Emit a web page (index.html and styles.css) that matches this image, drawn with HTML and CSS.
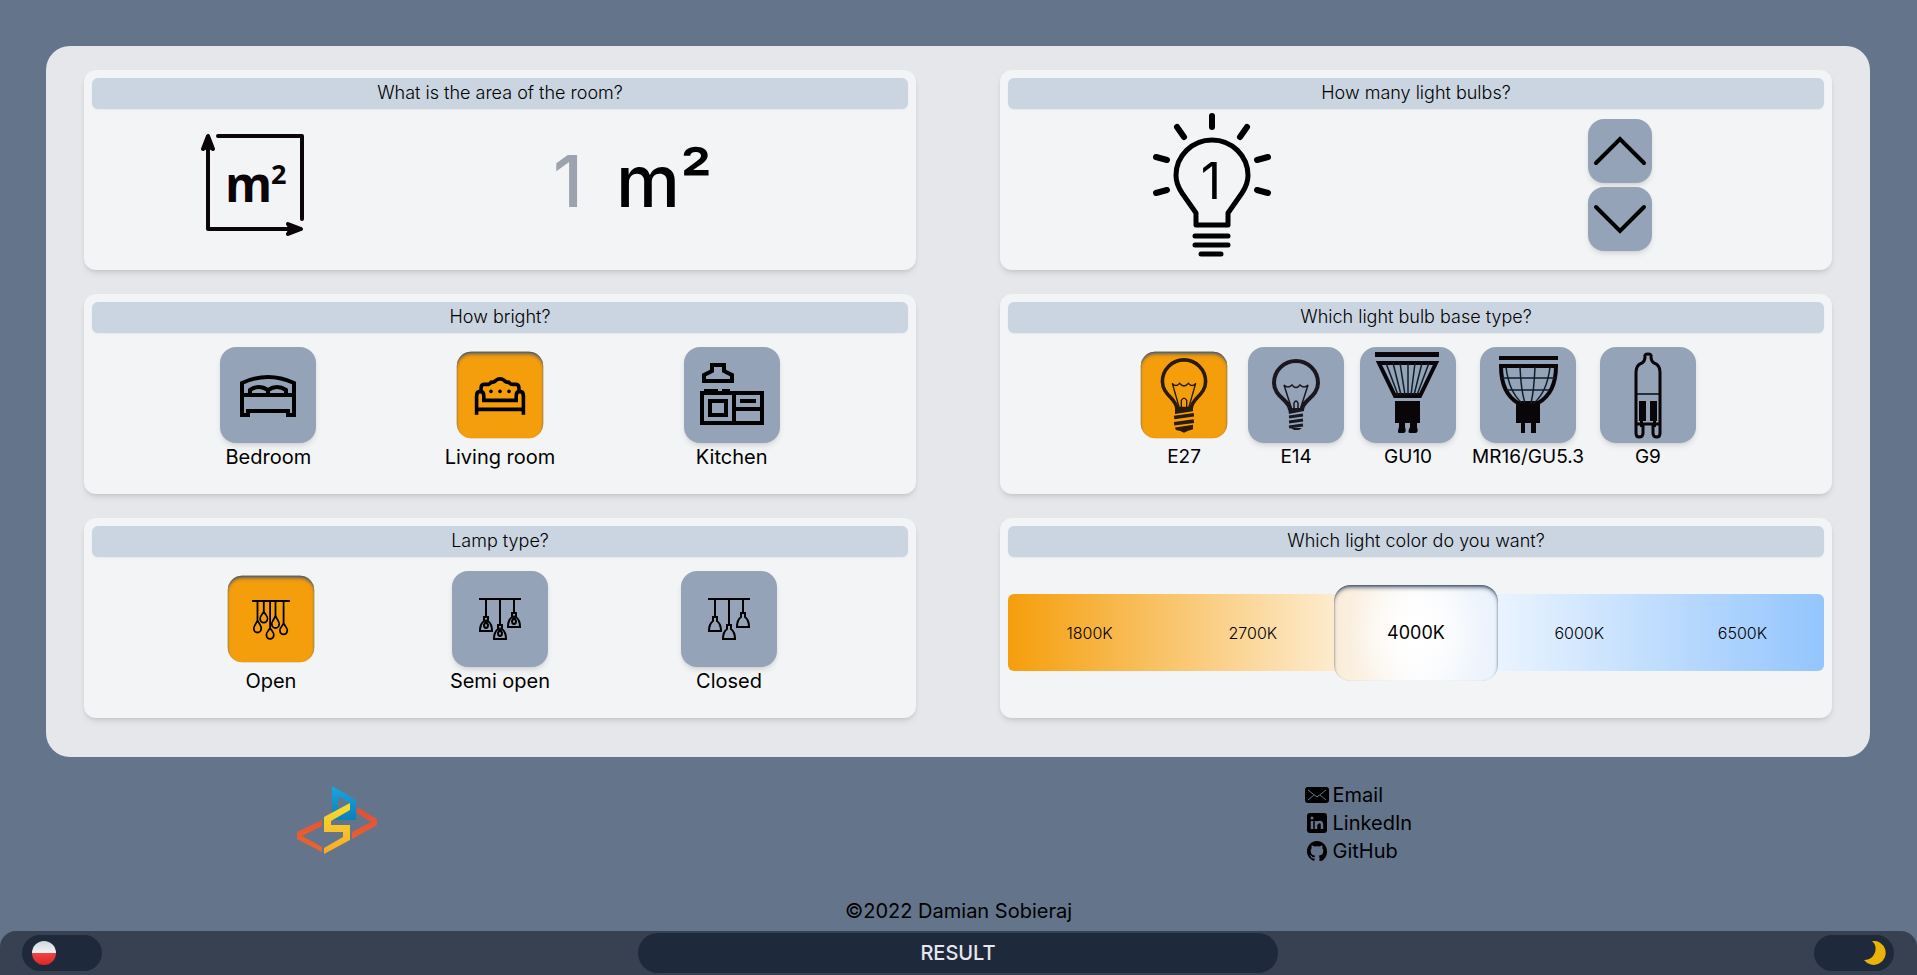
FILE: index.html
```html
<!DOCTYPE html>
<html lang="en">
<head>
<meta charset="utf-8">
<meta name="viewport" content="width=device-width, initial-scale=1">
<title>Light bulb calculator</title>
<link rel="stylesheet" href="styles.css">
</head>
<body>
<main class="panel">
  <section class="card">
    <h2 class="card-title"><label for="area">What is the area of the room?</label></h2>
    <div class="card-body spread">
      <svg class="area-icon" viewBox="0 0 104 104" aria-hidden="true">
        <g fill="none" stroke="#0b0408" stroke-width="4" stroke-linecap="round" stroke-linejoin="round">
          <path d="M8 4V96H100"/><path d="M18 3H102V86"/>
          <path fill="#0b0408" d="M8 3L3 16L8 13L13 16ZM101 96L88 91L91 96L88 101Z"/>
        </g>
        <text class="area-m" x="25" y="69">m</text><text class="area-sq" x="71" y="51">2</text>
      </svg>
      <div class="area-field">
        <input class="area-input" id="area" type="text" inputmode="numeric" placeholder="1">
        <span>m²</span>
      </div>
    </div>
  </section>

  <section class="card">
    <h2 class="card-title">How many light bulbs?</h2>
    <div class="card-body halves">
      <svg class="count-icon" viewBox="0 0 118 146" role="img" aria-label="1 bulb">
        <g fill="none" stroke="#000" stroke-width="5" stroke-linecap="round" stroke-linejoin="round">
          <path d="M43 113V101L29 81Q23 72 23 63.500A36 35.500 0 0 1 95 63.500Q95 72 89 81L75 101V113Z"/>
          <path d="M42 124H75M42 133H75M48 142H68"/>
          <path stroke-width="6" d="M59 4V15M24 15L31 25M94 15L87 25M3 45L14 48M115 45L104 48M3 81L14 78M115 81L104 78"/>
        </g>
        <text class="count-value" x="58" y="87">1</text>
      </svg>
      <div class="stepper">
        <button class="step" type="button" aria-label="More"><svg viewBox="0 0 64 64"><path d="M8 44L32 20L56 44"/></svg></button>
        <button class="step" type="button" aria-label="Fewer"><svg viewBox="0 0 64 64"><path d="M8 20L32 44L56 20"/></svg></button>
      </div>
    </div>
  </section>

  <section class="card">
    <h2 class="card-title">How bright?</h2>
    <div class="card-body evenly">
      <button class="choice" type="button" aria-pressed="false">
        <span class="tile"><svg class="line" viewBox="0 0 96 96"><path d="M22 68V36Q48 24 74 36V68H68V64H28V68ZM22 48H74M30 48V43Q39 37 48 43Q57 37 66 43V48M48 43V48"/></svg></span>
        <span>Bedroom</span>
      </button>
      <button class="choice" type="button" aria-pressed="true">
        <span class="tile"><svg class="line" viewBox="0 0 96 96"><path d="M22 70V49Q22 44 26 44Q30 44 30 49V54H66V49Q66 44 70 44Q74 44 74 49V70M22 64H74M27 43V40Q27 36 31 36Q36 37 38 34Q42 34 43 32Q48 28 53 32Q54 34 58 34Q60 37 65 36Q69 36 69 40V43"/><g fill="#000" stroke="none"><circle cx="38" cy="44" r="2"/><circle cx="48" cy="44" r="2"/><circle cx="58" cy="44" r="2"/></g></svg></span>
        <span>Living room</span>
      </button>
      <button class="choice" type="button" aria-pressed="false">
        <span class="tile"><svg class="line" viewBox="0 0 96 96"><path d="M20 34V28L28 24V18H40V24L48 28V34ZM18 46H78V76H18ZM50 46V76M50 62H78M56 54H72M26 54H42V68H26ZM20 44H34M38 44H46"/></svg></span>
        <span>Kitchen</span>
      </button>
    </div>
  </section>

  <section class="card">
    <h2 class="card-title">Which light bulb base type?</h2>
    <div class="card-body packed">
      <button class="choice" type="button" aria-pressed="true">
        <span class="tile"><svg viewBox="0 0 96 96"><g fill="none" stroke="#2a1a08"><path stroke-width="4" d="M40 63C40 52 24 48 24 33A24 24 0 0 1 72 33C72 48 56 52 56 63"/><path stroke-width="1.500" d="M43 63L35 35Q39 40 43 35Q48 41 53 35Q57 40 61 35L53 63M45 63V54Q48 49 51 54V63"/><path stroke-width="4" d="M37 73L59 70M37 80L59 77"/></g><path fill="#2a1a08" d="M38 61H58V66L38 69ZM38 84L58 81V86L52 88L48 90L44 88L39 87Z"/></svg></span>
        <span>E27</span>
      </button>
      <button class="choice" type="button" aria-pressed="false">
        <span class="tile"><svg viewBox="0 0 96 96"><g fill="none" stroke="#1a1720"><path stroke-width="4" d="M42 63C42 53 26 50 26 36A22 22 0 0 1 70 36C70 50 54 53 54 63"/><path stroke-width="1.500" d="M44 63L36 38Q40 42 44 38Q48 43 52 38Q56 42 60 38L52 63M46 62V56Q48 52 50 56V62"/><path stroke-width="3" d="M41 70L55 68M41 75L55 73M41 80L55 78"/></g><path fill="#1a1720" d="M40 61H56V64L41 67ZM43 81H54L51 83H46Z"/></svg></span>
        <span>E14</span>
      </button>
      <button class="choice" type="button" aria-pressed="false">
        <span class="tile"><svg viewBox="0 0 96 96"><path fill="#0a0508" d="M15 5H79V10H15ZM35 54H60V76H57V80Q59 86 55 86H50Q47 86 50 80V76H45V80Q47 86 43 86H39Q37 86 39 80V76H35ZM34 46H61V51H34Z"/><path fill="none" stroke="#0a0508" stroke-width="4" d="M19 16H76L60 49H35Z"/><path fill="none" stroke="#101c28" stroke-width="1.500" d="M26 16L38 48M33 16L41 48M40 16L45 48M48 16V48M55 16L51 48M62 16L54 48M69 16L57 48"/></svg></span>
        <span>GU10</span>
      </button>
      <button class="choice" type="button" aria-pressed="false">
        <span class="tile"><svg viewBox="0 0 96 96"><path fill="#0a0508" d="M19 9H78V13H19ZM36 55H60V76H56V86H51V76H45V86H41V76H36Z"/><path fill="none" stroke="#0a0508" stroke-width="4" d="M38 56Q21 46 21 19H76Q76 46 58 56Z"/><path fill="none" stroke="#101c28" stroke-width="1.500" d="M26 20Q29 45 42 56M40 20Q41 44 45 56M55 20Q54 44 51 56M70 20Q67 45 54 56M21 31H76M27 43H69"/></svg></span>
        <span>MR16/GU5.3</span>
      </button>
      <button class="choice" type="button" aria-pressed="false">
        <span class="tile"><svg viewBox="0 0 96 96"><g fill="none" stroke="#0a0508" stroke-width="3"><path d="M36 86V25Q36 18 42 16Q45 14 45 10Q44 7 48 7Q52 7 51 10Q51 14 54 16Q60 18 60 25V86Q60 90 57 90Q53 90 53 86V76M43 76V86Q43 90 39 90Q36 90 36 86M36 77H60"/><path stroke-width="1.500" d="M36 47H60"/></g><path fill="#0a0508" d="M39 54H46V74H43V80H40V74H39ZM50 54H57V74H56V80H53V74H50Z"/></svg></span>
        <span>G9</span>
      </button>
    </div>
  </section>

  <section class="card">
    <h2 class="card-title">Lamp type?</h2>
    <div class="card-body evenly">
      <button class="choice" type="button" aria-pressed="true">
        <span class="tile"><svg class="line thin" viewBox="0 0 96 96"><path d="M27 28H69M33 28V50M40 28V40M47 28V59M53 28V46M62 28V53"/><path d="M33 50Q28 58 29 59A4 4 0 0 0 37 59Q38 57 33 50ZM40 40Q35 47 36 48A4 4 0 0 0 44 48Q45 47 40 40ZM47 58Q42 65 43 66A4 4 0 0 0 51 66Q52 65 47 58ZM53 45Q48 53 49 54A4 4 0 0 0 57 54Q58 53 53 45ZM62 53Q57 60 58 61A4 4 0 0 0 66 61Q67 60 62 53Z"/></svg></span>
        <span>Open</span>
      </button>
      <button class="choice" type="button" aria-pressed="false">
        <span class="tile"><svg class="line thin" viewBox="0 0 96 96"><path d="M27 28H69M34 28V46M48 28V54M62 28V42"/><path d="M32 50V46H36V50Q40 53 40 60H28Q28 53 32 50ZM46 58V54H50V58Q54 61 54 68H42Q42 61 46 58ZM60 46V42H64V46Q68 49 68 56H56Q56 49 60 46Z"/><path d="M34 50L32 54A2 3 0 1 0 36 54ZM48 58L46 62A2 3 0 1 0 50 62ZM62 46L60 50A2 3 0 1 0 64 50Z"/></svg></span>
        <span>Semi open</span>
      </button>
      <button class="choice" type="button" aria-pressed="false">
        <span class="tile"><svg class="line thin" viewBox="0 0 96 96"><path d="M27 28H69M34 28V46M48 28V54M62 28V42"/><path d="M32 50V46H36V50Q40 53 40 60H28Q28 53 32 50ZM46 58V54H50V58Q54 61 54 68H42Q42 61 46 58ZM60 46V42H64V46Q68 49 68 56H56Q56 49 60 46Z"/></svg></span>
        <span>Closed</span>
      </button>
    </div>
  </section>

  <section class="card">
    <h2 class="card-title">Which light color do you want?</h2>
    <div class="card-body">
      <div class="colors">
        <button class="color" type="button" aria-pressed="false">1800K</button>
        <button class="color" type="button" aria-pressed="false">2700K</button>
        <button class="color" type="button" aria-pressed="true">4000K</button>
        <button class="color" type="button" aria-pressed="false">6000K</button>
        <button class="color" type="button" aria-pressed="false">6500K</button>
      </div>
    </div>
  </section>
</main>

<footer class="footer">
  <div class="footer-main">
    <svg class="logo" viewBox="0 0 82 70" role="img" aria-label="Author logo">
      <defs>
        <linearGradient id="blue" x2="0" y2="1"><stop stop-color="#1ba5e0"/><stop offset="1" stop-color="#0a80b8"/></linearGradient>
        <linearGradient id="yellow" x2="0" y2="1"><stop stop-color="#f6de2c"/><stop offset="1" stop-color="#f9a928"/></linearGradient>
        <linearGradient id="orange" x2="0" y2="1"><stop stop-color="#de4f38"/><stop offset="1" stop-color="#f0642a"/></linearGradient>
      </defs>
      <path fill="url(#blue)" fill-rule="evenodd" d="M36 1L60 15V35H36ZM42 11V24L53 18Z"/>
      <path fill="url(#orange)" d="M26 35L1 47V54L26 67V62L6 51L26 41ZM61 22L81 34V40L56 54V47L75 37L61 28Z"/>
      <path fill="url(#yellow)" d="M54 18V25L35 36V40H54V55L28 69V63L47 52V47H28V32Z"/>
    </svg>
    <nav class="links">
      <a href="#email"><svg viewBox="0 0 24 20"><rect y="2" width="24" height="16" rx="3"/><path fill="none" stroke="#64748b" d="M3 5L12 12L21 5M3 15L9 10M21 15L15 10"/></svg>Email</a>
      <a href="#linkedin"><svg viewBox="0 0 24 20"><rect x="2" width="20" height="20" rx="3"/><g fill="none" stroke="#64748b" stroke-width="2.500"><path d="M7 8V16M11 8V16M11 12Q12 9 15 9Q17 9 17 12V16"/></g><circle cx="7" cy="5" r="1.500" fill="#64748b"/></svg>LinkedIn</a>
      <a href="#github"><svg viewBox="-3 -1 30 26"><path d="M12 -1C5 -1 -1 5 -1 12.200c0 5.800 3.700 10.600 8.900 12.400.7.100.9-.3.900-.6v-2.300c-3.600.8-4.400-1.500-4.400-1.500-.6-1.500-1.400-1.900-1.400-1.900-1.200-.8.100-.8.100-.8 1.300.1 2 1.300 2 1.300 1.200 2 3 1.400 3.800 1.100.1-.8.500-1.400.8-1.700-2.900-.3-5.900-1.400-5.900-6.400 0-1.400.5-2.600 1.300-3.500-.1-.3-.6-1.600.1-3.400 0 0 1.100-.3 3.600 1.300a12 12 0 0 1 6.400 0c2.500-1.600 3.600-1.300 3.600-1.300.7 1.800.2 3.100.1 3.400.8.900 1.300 2.100 1.300 3.500 0 5-3 6.100-5.900 6.400.5.400.9 1.200.9 2.400v4.400c0 .3.200.7.900.6A13 13 0 0 0 25 12.200C25 5 19 -1 12 -1Z"/></svg>GitHub</a>
    </nav>
  </div>
  <p class="copyright">©2022 Damian Sobieraj</p>
</footer>

<div class="bar">
  <button class="toggle" type="button" aria-label="Change language"><span class="flag"></span></button>
  <button class="result" type="button">RESULT</button>
  <button class="toggle toggle-end" type="button" aria-label="Dark mode"><svg class="moon" viewBox="0 0 24 24"><path d="M10 0A12 12 0 1 1 2 19A11 11 0 0 0 10 0Z"/></svg></button>
</div>
</body>
</html>
```
FILE: styles.css
```css
* { box-sizing: border-box; }

body {
  margin: 0;
  min-height: 100vh;
  display: flex;
  flex-direction: column;
  background: #64748b;
  color: #000;
  font-family: Inter, sans-serif;
  font-size: 20px;
  line-height: 28px;
}

button {
  border: 0;
  padding: 0;
  background: none;
  color: inherit;
  font: inherit;
  cursor: pointer;
}

svg { display: block; }

.panel {
  margin: 46px 47px 0 46px;
  padding: 24px 38px 39px;
  display: grid;
  grid-template-columns: 1fr 1fr;
  gap: 24px 84px;
  background: #e5e7eb;
  border-radius: 24px;
}

.card {
  padding: 8px;
  background: #f3f4f6;
  border-radius: 12px;
  box-shadow: 0 4px 6px -1px rgba(0, 0, 0, .1), 0 2px 4px -2px rgba(0, 0, 0, .1);
}

.card-title {
  margin: 0;
  padding: 1px 0 2px;
  background: #cbd5e1;
  border-radius: 6px;
  box-shadow: 0 1px 2px rgba(0, 0, 0, .05);
  font-size: 18px;
  font-weight: 300;
  text-align: center;
}

.card-body {
  min-height: 153px;
  padding-bottom: 2px;
  display: flex;
  align-items: center;
}

.spread { justify-content: space-around; }
.evenly { justify-content: space-evenly; }
.packed { justify-content: center; gap: 16px; font-size: 19px; }

.halves {
  display: grid;
  grid-template-columns: 1fr 1fr;
  justify-items: center;
}

.area-icon { width: 104px; }
.area-m, .area-sq { font-family: "Open Sans", sans-serif; font-weight: 700; fill: #0b0408; }
.area-m { font-size: 48px; }
.area-sq { font-size: 27px; }

.area-field {
  width: 280px;
  padding-bottom: 8px;
  display: flex;
  align-items: center;
  font-size: 72px;
  font-weight: 500;
  line-height: 80px;
}

.area-input {
  width: 96px;
  padding: 0;
  border: 0;
  background: none;
  font: inherit;
  text-align: center;
}

.area-input::placeholder { color: #9ca3af; opacity: 1; }

.count-icon { width: 118px; }
.count-value { font-size: 50px; text-anchor: middle; }

.stepper { display: grid; gap: 4px; }

.step, .tile {
  background: #94a3b8;
  border-radius: 16px;
  box-shadow: 0 4px 6px -1px rgba(0, 0, 0, .1), 0 2px 4px -2px rgba(0, 0, 0, .1);
}

.step { width: 64px; height: 64px; }
.step path { fill: none; stroke: #000; stroke-width: 4; stroke-linecap: round; }

.choice {
  display: flex;
  flex-direction: column;
  align-items: center;
}

.tile { width: 96px; height: 96px; }

.choice[aria-pressed="true"] .tile {
  background: #f59e0b;
  transform: scale(.9);
  box-shadow: inset 0 4px 5px -2px #475569, inset 0 1px 2px #64748b;
}

.line { fill: none; stroke: #000; stroke-width: 4; }
.thin { stroke-width: 2; }

.colors {
  flex: 1;
  height: 77px;
  display: grid;
  grid-template-columns: repeat(5, 1fr);
  align-items: center;
  border-radius: 6px;
  background: linear-gradient(90deg, #f59e0b, #fff, #93c5fd);
}

.color { height: 77px; font-size: 16px; font-weight: 300; }

.color[aria-pressed="true"] {
  height: 96px;
  margin: -10px 0;
  border-radius: 16px;
  background: radial-gradient(circle, #fff 10%, rgba(243, 244, 246, .3) 70%), linear-gradient(90deg, #fde8ca, #fff, #e6f1ff);
  box-shadow: inset 0 4px 5px -2px #475569, inset 0 1px 2px #64748b;
  font-size: 18px;
  font-weight: 400;
}

.footer-main {
  padding-top: 24px;
  display: grid;
  grid-template-columns: 35% 33% 1fr;
}

.logo { width: 82px; margin: 4px 0 0 4px; justify-self: center; }
.links { grid-column: 3; padding-left: 1px; display: grid; justify-content: start; }

.links a {
  display: flex;
  align-items: center;
  gap: 4px;
  color: inherit;
  text-decoration: none;
}

.links svg { width: 24px; height: 20px; }
.copyright { margin: 32px 0 0; text-align: center; }

.bar {
  position: sticky;
  bottom: 0;
  margin-top: auto;
  height: 44px;
  padding: 0 23px 0 22px;
  display: grid;
  grid-template-columns: 1fr minmax(200px, 640px) 1fr;
  align-items: center;
  background: #374151;
  border-radius: 16px 16px 0 0;
}

.result {
  height: 40px;
  border-radius: 20px;
  background: #1e293b;
  color: #e5e7eb;
  font-weight: 500;
}

.toggle {
  width: 80px;
  height: 36px;
  padding: 0 8px 0 10px;
  display: flex;
  align-items: center;
  border-radius: 18px;
  background: #1e293b;
}

.toggle-end { justify-self: end; justify-content: flex-end; }

.flag {
  width: 24px;
  height: 24px;
  border-radius: 50%;
  background: linear-gradient(#d1d5db, #f3f4f6 50%, #ef4444 50%, #dc2626);
}

.moon { width: 24px; fill: #eab308; }
```
